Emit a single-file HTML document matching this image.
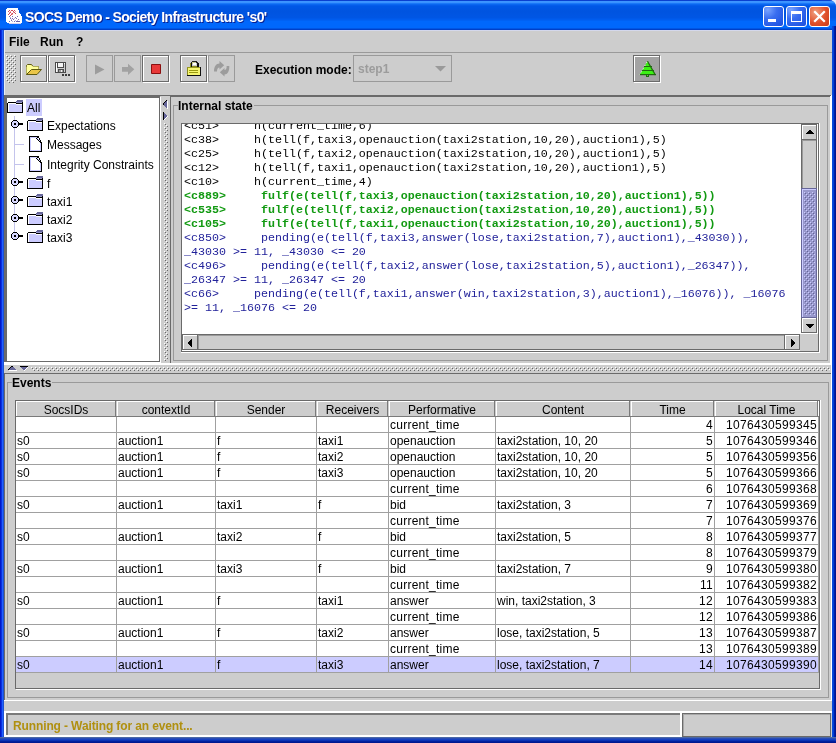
<!DOCTYPE html>
<html><head><meta charset="utf-8"><style>
*{margin:0;padding:0;box-sizing:border-box}
html,body{width:836px;height:743px;overflow:hidden;background:#E4ECFA}
body{position:relative;font-family:"Liberation Sans",sans-serif;font-size:12px;color:#000}
.a{position:absolute}
.t{white-space:pre;line-height:14px;will-change:transform}
.b{font-weight:bold}
.m{font-family:"Liberation Mono",monospace;font-size:11.67px;line-height:14px;white-space:pre;will-change:transform}
svg{position:absolute;overflow:visible}
</style></head><body>
<div class="a" style="left:0px;top:0px;width:836px;height:743px;background:#0A46D8;border-radius:0 7px 0 0"></div>
<div class="a" style="left:0px;top:0px;width:836px;height:30px;border-radius:0 7px 0 0;background:linear-gradient(to bottom,#0A40D0 0px,#0A40D0 1px,#3D95FF 1px,#3D95FF 2px,#3A92FF 2px,#3A92FF 3px,#1A78F8 3px,#1A78F8 4px,#0A66F0 4px,#0A66F0 5px,#045CEA 5px,#045CEA 6px,#0057E6 6px,#0057E6 7px,#0054E0 11px,#0054E0 12px,#0056E4 17px,#0056E4 18px,#005CEE 19px,#005CEE 20px,#0062F4 20px,#0062F4 21px,#0068FC 21px,#0068FC 22px,#0068FC 27px,#0068FC 28px,#0056E4 28px,#0056E4 29px,#0040C8 29px,#0040C8 30px)"></div>
<div class="a" style="left:0px;top:30px;width:4px;height:713px;background:linear-gradient(to right,#0018C8 0px,#0018C8 1px,#0A30E0 1px,#0A30E0 2px,#2060FF 2px,#2060FF 3px,#1E50D0 3px,#1E50D0 4px)"></div>
<div class="a" style="left:832px;top:26px;width:4px;height:717px;background:linear-gradient(to right,#0A48D8 0px,#0A48D8 1px,#0040D8 1px,#0040D8 2px,#0020A8 2px,#0020A8 3px,#001490 3px,#001490 4px)"></div>
<div class="a" style="left:0px;top:737px;width:836px;height:6px;background:linear-gradient(to bottom,#4A68A8 0px,#4A68A8 1px,#2A4CB4 1px,#2A4CB4 2px,#1640C0 2px,#1640C0 3px,#0A32B4 3px,#0A32B4 4px,#02209C 4px,#02209C 5px,#001890 5px,#001890 6px)"></div>
<div class="a" style="left:4px;top:30px;width:828px;height:707px;background:#CDCDCD"></div>
<div class="a" style="left:4px;top:30px;width:828px;height:1px;background:#D4D8EC"></div>
<svg style="left:6px;top:8px" width="16" height="16" shape-rendering="crispEdges"><rect x="1" y="0" width="11" height="1" fill="#FFFFFF"/><rect x="0" y="1" width="12" height="1" fill="#FFFFFF"/><rect x="0" y="2" width="13" height="1" fill="#FFFFFF"/><rect x="0" y="3" width="13" height="1" fill="#FFFFFF"/><rect x="0" y="4" width="13" height="1" fill="#FFFFFF"/><rect x="0" y="5" width="14" height="1" fill="#FFFFFF"/><rect x="0" y="6" width="15" height="1" fill="#FFFFFF"/><rect x="0" y="7" width="15" height="1" fill="#FFFFFF"/><rect x="0" y="8" width="16" height="1" fill="#FFFFFF"/><rect x="0" y="9" width="16" height="1" fill="#FFFFFF"/><rect x="0" y="10" width="16" height="1" fill="#FFFFFF"/><rect x="0" y="11" width="16" height="1" fill="#FFFFFF"/><rect x="0" y="12" width="16" height="1" fill="#FFFFFF"/><rect x="0" y="13" width="16" height="1" fill="#FFFFFF"/><rect x="1" y="14" width="15" height="1" fill="#FFFFFF"/><rect x="3" y="15" width="12" height="1" fill="#D8D0F0"/><rect x="3" y="2" width="1" height="1" fill="#D04858"/><rect x="5" y="2" width="1" height="1" fill="#D04858"/><rect x="2" y="3" width="1" height="1" fill="#D04858"/><rect x="4" y="4" width="1" height="1" fill="#D04858"/><rect x="7" y="3" width="1" height="1" fill="#D04858"/><rect x="8" y="4" width="1" height="1" fill="#D04858"/><rect x="3" y="5" width="1" height="1" fill="#D04858"/><rect x="6" y="5" width="1" height="1" fill="#D04858"/><rect x="5" y="6" width="1" height="1" fill="#D04858"/><rect x="9" y="5" width="1" height="1" fill="#D04858"/><rect x="2" y="6" width="1" height="1" fill="#D04858"/><rect x="6" y="2" width="1" height="1" fill="#D04858"/><rect x="8" y="2" width="1" height="1" fill="#D04858"/><rect x="4" y="7" width="1" height="1" fill="#D04858"/><rect x="4" y="3" width="1" height="1" fill="#F0A0A8"/><rect x="7" y="4" width="1" height="1" fill="#F0A0A8"/><rect x="5" y="5" width="1" height="1" fill="#F0A0A8"/><rect x="9" y="3" width="1" height="1" fill="#F0A0A8"/><rect x="6" y="6" width="1" height="1" fill="#F0A0A8"/><rect x="3" y="4" width="1" height="1" fill="#F0A0A8"/><rect x="3" y="8" width="1" height="1" fill="#7868B0"/><rect x="6" y="8" width="1" height="1" fill="#7868B0"/><rect x="9" y="9" width="1" height="1" fill="#7868B0"/><rect x="4" y="10" width="1" height="1" fill="#7868B0"/><rect x="7" y="11" width="1" height="1" fill="#7868B0"/><rect x="10" y="10" width="1" height="1" fill="#7868B0"/><rect x="5" y="12" width="1" height="1" fill="#7868B0"/><rect x="8" y="13" width="1" height="1" fill="#7868B0"/><rect x="12" y="11" width="1" height="1" fill="#7868B0"/><rect x="3" y="13" width="1" height="1" fill="#7868B0"/><rect x="11" y="8" width="1" height="1" fill="#7868B0"/><rect x="6" y="10" width="1" height="1" fill="#7868B0"/><rect x="4" y="9" width="1" height="1" fill="#B8B0E0"/><rect x="8" y="10" width="1" height="1" fill="#B8B0E0"/><rect x="5" y="11" width="1" height="1" fill="#B8B0E0"/><rect x="9" y="12" width="1" height="1" fill="#B8B0E0"/><rect x="6" y="13" width="1" height="1" fill="#B8B0E0"/><rect x="11" y="12" width="1" height="1" fill="#B8B0E0"/><rect x="10" y="13" width="4" height="1" fill="#6A60A8"/></svg>
<div class="a t b" style="left:25px;top:9px;color:#fff;font-size:14px;letter-spacing:-0.62px;line-height:16px;text-shadow:1px 1px 0 #0A2090">SOCS Demo - Society Infrastructure 's0'</div>
<div class="a" style="left:763px;top:6px;width:21px;height:21px;border:1px solid #fff;border-radius:3px;background:radial-gradient(circle at 20% 15%,#7AA4FF,#3A6EF0 40%,#2458E4 80%,#1E50DC)"></div>
<div class="a" style="left:786px;top:6px;width:21px;height:21px;border:1px solid #fff;border-radius:3px;background:radial-gradient(circle at 20% 15%,#7AA4FF,#3A6EF0 40%,#2458E4 80%,#1E50DC)"></div>
<div class="a" style="left:809px;top:6px;width:21px;height:21px;border:1px solid #fff;border-radius:3px;background:radial-gradient(circle at 30% 30%,#F0A080,#E0502A 55%,#C83A18)"></div>
<div class="a" style="left:768px;top:19px;width:8px;height:3px;background:#fff"></div>
<div class="a" style="left:791px;top:11px;width:11px;height:11px;border:1px solid #fff;border-top:3px solid #fff"></div>
<svg style="left:809px;top:6px" width="21" height="21" viewBox="0 0 21 21">
<path d="M6 6L15 15M15 6L6 15" stroke="#fff" stroke-width="2.2" stroke-linecap="square"/></svg>
<div class="a t b" style="left:9px;top:35px">File</div>
<div class="a t b" style="left:40px;top:35px">Run</div>
<div class="a t b" style="left:76px;top:35px">?</div>
<div class="a" style="left:4px;top:52px;width:828px;height:1px;background:#9A9A9A"></div>
<svg style="left:6px;top:55px" width="10" height="28" shape-rendering="crispEdges"><defs><pattern id="grip" width="4" height="4" patternUnits="userSpaceOnUse"><rect x="0" y="0" width="1" height="1" fill="#FFFFFF"/><rect x="1" y="1" width="1" height="1" fill="#666666"/><rect x="2" y="2" width="1" height="1" fill="#FFFFFF"/><rect x="3" y="3" width="1" height="1" fill="#666666"/></pattern></defs><rect width="10" height="28" fill="url(#grip)"/></svg>
<div class="a" style="left:4px;top:31px;width:1px;height:64px;background:#E8EEF6"></div>
<div class="a" style="left:21px;top:56px;width:27px;height:27px;border:1px solid #FFFFFF"></div>
<div class="a" style="left:20px;top:55px;width:27px;height:27px;border:1px solid #6B6B6B"></div>
<div class="a" style="left:49px;top:56px;width:27px;height:27px;border:1px solid #FFFFFF"></div>
<div class="a" style="left:48px;top:55px;width:27px;height:27px;border:1px solid #6B6B6B"></div>
<div class="a" style="left:86px;top:55px;width:27px;height:27px;border:1px solid #9A9A9A"></div>
<div class="a" style="left:114px;top:55px;width:27px;height:27px;border:1px solid #9A9A9A"></div>
<div class="a" style="left:143px;top:56px;width:27px;height:27px;border:1px solid #FFFFFF"></div>
<div class="a" style="left:142px;top:55px;width:27px;height:27px;border:1px solid #6B6B6B"></div>
<div class="a" style="left:181px;top:56px;width:27px;height:27px;border:1px solid #FFFFFF"></div>
<div class="a" style="left:180px;top:55px;width:27px;height:27px;border:1px solid #6B6B6B"></div>
<div class="a" style="left:208px;top:55px;width:27px;height:27px;border:1px solid #9A9A9A"></div>
<svg style="left:24px;top:58px" width="20" height="20" viewBox="0 0 20 20">
<path d="M2.5 16.5V7.5L3.5 6.5H7.5L9 8.5H14.5V11.5" fill="#FFFF9C" stroke="#5E5A12" stroke-width="1"/>
<path d="M2.5 16.5V8.5H14.5V11.5H6.5z" fill="#FFFF9C"/>
<path d="M7.5 11.5H17.5L13 16.5H2.5Z" fill="#EAC64A" stroke="#5E5A12" stroke-width="1" stroke-linejoin="round"/>
</svg>
<svg style="left:52px;top:58px" width="20" height="20" shape-rendering="crispEdges"><rect x="3" y="4" width="11" height="11" fill="#CDCDCD"/><rect x="3" y="4" width="11" height="1" fill="#4A4A4A"/><rect x="3" y="4" width="1" height="11" fill="#4A4A4A"/><rect x="13" y="4" width="1" height="11" fill="#4A4A4A"/><rect x="3" y="14" width="11" height="1" fill="#4A4A4A"/><rect x="4" y="5" width="1" height="9" fill="#FFFFFF"/><rect x="6" y="5" width="5" height="4" fill="#F4F4F4"/><rect x="5" y="5" width="1" height="4" fill="#4A4A4A"/><rect x="11" y="5" width="1" height="4" fill="#4A4A4A"/><rect x="5" y="9" width="7" height="1" fill="#4A4A4A"/><rect x="12" y="5" width="1" height="1" fill="#FFFFFF"/><rect x="6" y="11" width="6" height="1" fill="#4A4A4A"/><rect x="6" y="11" width="1" height="3" fill="#4A4A4A"/><rect x="11" y="11" width="1" height="3" fill="#4A4A4A"/><rect x="7" y="12" width="4" height="2" fill="#9C9C9C"/><rect x="9" y="12" width="1" height="2" fill="#F0F0F0"/><rect x="10" y="16" width="2" height="2" fill="#3A3A3A"/><rect x="13" y="16" width="2" height="2" fill="#3A3A3A"/><rect x="16" y="16" width="2" height="2" fill="#3A3A3A"/></svg>
<svg style="left:94px;top:64px" width="12" height="11" viewBox="0 0 12 11"><path d="M1 0.5L10.5 5.5L1 10.5z" fill="#9C9C9C"/></svg>
<svg style="left:121px;top:63px" width="15" height="13" viewBox="0 0 15 13"><path d="M1 4H7V0.8L13.3 6.3L7 12V8.8H1z" fill="#A2A2A2"/></svg>
<svg style="left:150px;top:63px" width="12" height="12" viewBox="0 0 12 12"><path d="M1.5 1.5h9v9h-9z" fill="#E83838" stroke="#8A1010"/></svg>
<svg style="left:184px;top:58px" width="20" height="20" shape-rendering="crispEdges"><rect x="8" y="3" width="5" height="1" fill="#222"/><rect x="7" y="4" width="1" height="1" fill="#222"/><rect x="8" y="4" width="4" height="1" fill="#C8C890"/><rect x="12" y="4" width="2" height="1" fill="#222"/><rect x="6" y="5" width="1" height="4" fill="#8A8A20"/><rect x="7" y="5" width="1" height="4" fill="#111"/><rect x="8" y="5" width="1" height="1" fill="#C8C890"/><rect x="9" y="5" width="3" height="2" fill="#FFFFFF"/><rect x="13" y="5" width="2" height="4" fill="#111"/><rect x="8" y="8" width="5" height="1" fill="#8A8A20"/><rect x="3" y="9" width="14" height="1" fill="#9A9A20"/><rect x="3" y="10" width="1" height="7" fill="#8A8A20"/><rect x="4" y="10" width="12" height="7" fill="#F6F670"/><rect x="16" y="9" width="1" height="9" fill="#111"/><rect x="5" y="12" width="9" height="1" fill="#9A9A10"/><rect x="5" y="14" width="9" height="1" fill="#9A9A10"/><rect x="3" y="17" width="14" height="1" fill="#111"/></svg>
<svg style="left:211px;top:58px" width="20" height="20" viewBox="0 0 20 20">
<path d="M8.5 3L13.2 7.3L8.5 11.5V9.5C7 9.5 6 11 6 13.5H3C3 8.5 5 5.5 8.5 5.5z" fill="#9C9C9C"/>
<path d="M13.5 18.5L8.8 14.2L13.5 10V12C15 12 15.8 10.5 15.6 8H18.3C18.5 13 16.5 16.5 13.5 16.5z" fill="#9C9C9C"/>
</svg>
<div class="a t b" style="left:255px;top:63px">Execution mode:</div>
<div class="a" style="left:353px;top:55px;width:99px;height:27px;border:1px solid #9A9A9A"></div>
<div class="a t b" style="left:358px;top:62px;color:#9C9C9C">step1</div>
<svg style="left:435px;top:66px" width="12" height="6" viewBox="0 0 12 6"><path d="M0 0h11l-5.5 5.5z" fill="#9A9A9A"/></svg>
<div class="a" style="left:634px;top:56px;width:26px;height:26px;background:#A3A3A3"></div>
<div class="a" style="left:634px;top:56px;width:27px;height:27px;border:1px solid #FFFFFF"></div>
<div class="a" style="left:633px;top:55px;width:27px;height:27px;border:1px solid #6B6B6B"></div>
<svg style="left:639px;top:61px" width="18" height="18" viewBox="0 0 18 18">
<polygon points="8.5,0.3 16.4,14 0.6,14" fill="#3CF014"/>
<path d="M8.5 0.3L16.4 14" stroke="#1F6A0E" stroke-width="1.3"/>
<path d="M8 1L0.6 14" stroke="#EFFFE0" stroke-width="0.9" stroke-dasharray="1.2 2.4"/>
<rect x="5" y="5" width="8" height="1" fill="#1F6A0E"/>
<rect x="3" y="9" width="12" height="1" fill="#1F6A0E"/>
<rect x="1" y="13" width="16" height="1.2" fill="#1F6A0E"/>
<rect x="7" y="14" width="3" height="2" fill="#1F6A0E"/>
<rect x="8" y="14" width="1" height="1" fill="#5AE030"/>
</svg>
<div class="a" style="left:4px;top:95px;width:827px;height:1px;background:#6A6A6A"></div>
<div class="a" style="left:4px;top:96px;width:156px;height:1px;background:#6A6A6A"></div>
<div class="a" style="left:170px;top:96px;width:661px;height:1px;background:#6A6A6A"></div>
<div class="a" style="left:4px;top:97px;width:156px;height:1px;background:#6A6A6A"></div>
<div class="a" style="left:4px;top:95px;width:3px;height:267px;background:#6A6A6A"></div>
<div class="a" style="left:7px;top:98px;width:152px;height:263px;background:#fff"></div>
<div class="a" style="left:159px;top:97px;width:1px;height:265px;background:#6A6A6A"></div>
<div class="a" style="left:6px;top:361px;width:154px;height:1px;background:#6A6A6A"></div>
<div class="a" style="left:160px;top:97px;width:1px;height:266px;background:#FFFFFF"></div>
<div class="a" style="left:4px;top:362px;width:157px;height:1px;background:#FFFFFF"></div>
<svg style="left:164px;top:123px" width="4" height="238" shape-rendering="crispEdges"><defs><pattern id="bv" width="4" height="4" patternUnits="userSpaceOnUse"><rect x="0" y="0" width="1" height="1" fill="#FFFFFF"/><rect x="1" y="1" width="1" height="1" fill="#666666"/><rect x="2" y="2" width="1" height="1" fill="#FFFFFF"/><rect x="3" y="3" width="1" height="1" fill="#666666"/></pattern></defs><rect width="4" height="238" fill="url(#bv)"/></svg>
<div class="a" style="left:170px;top:96px;width:1px;height:267px;background:#6A6A6A"></div>
<svg style="left:163px;top:100px" width="5" height="9" shape-rendering="crispEdges"><rect x="0" y="3" width="1" height="1" fill="#000000"/><rect x="0" y="4" width="1" height="1" fill="#000000"/><rect x="1" y="2" width="1" height="1" fill="#000000"/><rect x="1" y="3" width="1" height="1" fill="#666699"/><rect x="1" y="4" width="1" height="1" fill="#666699"/><rect x="1" y="5" width="1" height="1" fill="#666699"/><rect x="2" y="1" width="1" height="1" fill="#000000"/><rect x="2" y="2" width="1" height="1" fill="#666699"/><rect x="2" y="3" width="1" height="1" fill="#666699"/><rect x="2" y="4" width="1" height="1" fill="#666699"/><rect x="2" y="5" width="1" height="1" fill="#666699"/><rect x="2" y="6" width="1" height="1" fill="#666699"/><rect x="3" y="0" width="1" height="1" fill="#000000"/><rect x="3" y="1" width="1" height="1" fill="#666699"/><rect x="3" y="2" width="1" height="1" fill="#666699"/><rect x="3" y="3" width="1" height="1" fill="#666699"/><rect x="3" y="4" width="1" height="1" fill="#666699"/><rect x="3" y="5" width="1" height="1" fill="#666699"/><rect x="3" y="6" width="1" height="1" fill="#666699"/><rect x="3" y="7" width="1" height="1" fill="#666699"/><rect x="4" y="1" width="1" height="1" fill="#FFFFFF"/><rect x="4" y="2" width="1" height="1" fill="#FFFFFF"/><rect x="4" y="3" width="1" height="1" fill="#FFFFFF"/><rect x="4" y="4" width="1" height="1" fill="#FFFFFF"/><rect x="4" y="5" width="1" height="1" fill="#FFFFFF"/><rect x="4" y="6" width="1" height="1" fill="#FFFFFF"/><rect x="4" y="7" width="1" height="1" fill="#FFFFFF"/><rect x="4" y="8" width="1" height="1" fill="#FFFFFF"/></svg>
<svg style="left:163px;top:112px" width="5" height="8" shape-rendering="crispEdges"><rect x="0" y="0" width="1" height="1" fill="#000000"/><rect x="0" y="1" width="1" height="1" fill="#000000"/><rect x="0" y="2" width="1" height="1" fill="#000000"/><rect x="0" y="3" width="1" height="1" fill="#000000"/><rect x="0" y="4" width="1" height="1" fill="#000000"/><rect x="0" y="5" width="1" height="1" fill="#000000"/><rect x="0" y="6" width="1" height="1" fill="#000000"/><rect x="0" y="7" width="1" height="1" fill="#000000"/><rect x="1" y="1" width="1" height="1" fill="#666699"/><rect x="1" y="2" width="1" height="1" fill="#666699"/><rect x="1" y="3" width="1" height="1" fill="#666699"/><rect x="1" y="4" width="1" height="1" fill="#666699"/><rect x="1" y="5" width="1" height="1" fill="#666699"/><rect x="1" y="6" width="1" height="1" fill="#666699"/><rect x="1" y="7" width="1" height="1" fill="#FFFFFF"/><rect x="2" y="2" width="1" height="1" fill="#666699"/><rect x="2" y="3" width="1" height="1" fill="#666699"/><rect x="2" y="4" width="1" height="1" fill="#666699"/><rect x="2" y="5" width="1" height="1" fill="#666699"/><rect x="2" y="6" width="1" height="1" fill="#FFFFFF"/><rect x="3" y="3" width="1" height="1" fill="#666699"/><rect x="3" y="4" width="1" height="1" fill="#666699"/><rect x="3" y="5" width="1" height="1" fill="#FFFFFF"/><rect x="4" y="4" width="1" height="1" fill="#FFFFFF"/></svg>
<div class="a" style="left:830px;top:96px;width:1px;height:268px;background:#FFFFFF"></div>
<div class="a" style="left:831px;top:95px;width:1px;height:606px;background:#FFFFFF"></div>
<div class="a" style="left:4px;top:363px;width:828px;height:1px;background:#FFFFFF"></div>
<div class="a" style="left:4px;top:364px;width:827px;height:1px;background:#FFFFFF"></div>
<div class="a" style="left:26px;top:99px;width:16px;height:17px;background:#CCCCFF"></div>
<svg style="left:7px;top:97px" width="16" height="16" shape-rendering="crispEdges"><rect x="10" y="3" width="6" height="1" fill="#666699"/><rect x="9" y="4" width="7" height="1" fill="#666699"/><rect x="2" y="7" width="13" height="1" fill="#CCCCFF"/><rect x="9" y="5" width="6" height="1" fill="#9999CC"/><rect x="0" y="6" width="1" height="10" fill="#000"/><rect x="1" y="5" width="8" height="1" fill="#000"/><rect x="9" y="6" width="6" height="1" fill="#000"/><rect x="15" y="5" width="1" height="11" fill="#000"/><rect x="0" y="15" width="16" height="1" fill="#000"/><rect x="1" y="6" width="1" height="9" fill="#fff"/><rect x="1" y="6" width="8" height="1" fill="#fff"/><rect x="9" y="7" width="6" height="1" fill="#fff"/></svg>
<div class="a" style="left:9px;top:105px;width:13px;height:7px;background:#CCCCFF"></div>
<div class="a t" style="left:27px;top:101px">All</div>
<div class="a" style="left:14px;top:116px;width:1px;height:121px;background:#C4C4EC"></div>
<svg style="left:7px;top:116px" width="16" height="16" shape-rendering="crispEdges"><rect x="5" y="6" width="6" height="4" fill="#D8D8FF"/><rect x="6" y="5" width="4" height="6" fill="#D8D8FF"/><rect x="4" y="6" width="1" height="4" fill="#000"/><rect x="5" y="5" width="1" height="1" fill="#000"/><rect x="6" y="4" width="4" height="1" fill="#000"/><rect x="10" y="5" width="1" height="1" fill="#000"/><rect x="11" y="6" width="1" height="4" fill="#000"/><rect x="10" y="10" width="1" height="1" fill="#000"/><rect x="6" y="11" width="4" height="1" fill="#000"/><rect x="5" y="10" width="1" height="1" fill="#000"/><rect x="7" y="7" width="2" height="2" fill="#000"/><rect x="12" y="7" width="4" height="2" fill="#000"/></svg>
<svg style="left:27px;top:115px" width="16" height="16" shape-rendering="crispEdges"><rect x="10" y="3" width="6" height="1" fill="#666699"/><rect x="9" y="4" width="7" height="1" fill="#666699"/><rect x="2" y="7" width="13" height="1" fill="#CCCCFF"/><rect x="9" y="5" width="6" height="1" fill="#9999CC"/><rect x="0" y="6" width="1" height="10" fill="#000"/><rect x="1" y="5" width="8" height="1" fill="#000"/><rect x="9" y="6" width="6" height="1" fill="#000"/><rect x="15" y="5" width="1" height="11" fill="#000"/><rect x="0" y="15" width="16" height="1" fill="#000"/><rect x="1" y="6" width="1" height="9" fill="#fff"/><rect x="1" y="6" width="8" height="1" fill="#fff"/><rect x="9" y="7" width="6" height="1" fill="#fff"/></svg>
<div class="a" style="left:29px;top:123px;width:13px;height:7px;background:#CCCCFF"></div>
<div class="a t" style="left:47px;top:119px">Expectations</div>
<div class="a" style="left:15px;top:144px;width:9px;height:1px;background:#C4C4EC"></div>
<svg style="left:27px;top:136px" width="16" height="16" shape-rendering="crispEdges"><rect x="4" y="2" width="9" height="12" fill="#fff"/><rect x="2" y="0" width="1" height="16" fill="#000"/><rect x="2" y="0" width="10" height="1" fill="#000"/><rect x="2" y="15" width="13" height="1" fill="#000"/><rect x="14" y="6" width="1" height="10" fill="#000"/><rect x="9" y="2" width="1" height="1" fill="#000"/><rect x="10" y="3" width="1" height="1" fill="#000"/><rect x="11" y="4" width="1" height="1" fill="#000"/><rect x="12" y="5" width="1" height="1" fill="#000"/><rect x="13" y="6" width="1" height="1" fill="#000"/><rect x="10" y="1" width="2" height="1" fill="#000"/><rect x="12" y="2" width="1" height="2" fill="#000"/><rect x="13" y="4" width="1" height="2" fill="#000"/><rect x="3" y="1" width="1" height="14" fill="#CCCCFF"/><rect x="3" y="1" width="7" height="1" fill="#CCCCFF"/><rect x="13" y="7" width="1" height="8" fill="#CCCCFF"/><rect x="10" y="2" width="1" height="1" fill="#CCCCFF"/><rect x="11" y="3" width="1" height="1" fill="#CCCCFF"/><rect x="12" y="4" width="1" height="1" fill="#CCCCFF"/><rect x="3" y="14" width="11" height="1" fill="#CCCCFF"/></svg>
<div class="a t" style="left:47px;top:138px">Messages</div>
<div class="a" style="left:15px;top:164px;width:9px;height:1px;background:#C4C4EC"></div>
<svg style="left:27px;top:156px" width="16" height="16" shape-rendering="crispEdges"><rect x="4" y="2" width="9" height="12" fill="#fff"/><rect x="2" y="0" width="1" height="16" fill="#000"/><rect x="2" y="0" width="10" height="1" fill="#000"/><rect x="2" y="15" width="13" height="1" fill="#000"/><rect x="14" y="6" width="1" height="10" fill="#000"/><rect x="9" y="2" width="1" height="1" fill="#000"/><rect x="10" y="3" width="1" height="1" fill="#000"/><rect x="11" y="4" width="1" height="1" fill="#000"/><rect x="12" y="5" width="1" height="1" fill="#000"/><rect x="13" y="6" width="1" height="1" fill="#000"/><rect x="10" y="1" width="2" height="1" fill="#000"/><rect x="12" y="2" width="1" height="2" fill="#000"/><rect x="13" y="4" width="1" height="2" fill="#000"/><rect x="3" y="1" width="1" height="14" fill="#CCCCFF"/><rect x="3" y="1" width="7" height="1" fill="#CCCCFF"/><rect x="13" y="7" width="1" height="8" fill="#CCCCFF"/><rect x="10" y="2" width="1" height="1" fill="#CCCCFF"/><rect x="11" y="3" width="1" height="1" fill="#CCCCFF"/><rect x="12" y="4" width="1" height="1" fill="#CCCCFF"/><rect x="3" y="14" width="11" height="1" fill="#CCCCFF"/></svg>
<div class="a t" style="left:47px;top:158px">Integrity Constraints</div>
<svg style="left:7px;top:174px" width="16" height="16" shape-rendering="crispEdges"><rect x="5" y="6" width="6" height="4" fill="#D8D8FF"/><rect x="6" y="5" width="4" height="6" fill="#D8D8FF"/><rect x="4" y="6" width="1" height="4" fill="#000"/><rect x="5" y="5" width="1" height="1" fill="#000"/><rect x="6" y="4" width="4" height="1" fill="#000"/><rect x="10" y="5" width="1" height="1" fill="#000"/><rect x="11" y="6" width="1" height="4" fill="#000"/><rect x="10" y="10" width="1" height="1" fill="#000"/><rect x="6" y="11" width="4" height="1" fill="#000"/><rect x="5" y="10" width="1" height="1" fill="#000"/><rect x="7" y="7" width="2" height="2" fill="#000"/><rect x="12" y="7" width="4" height="2" fill="#000"/></svg>
<svg style="left:27px;top:173px" width="16" height="16" shape-rendering="crispEdges"><rect x="10" y="3" width="6" height="1" fill="#666699"/><rect x="9" y="4" width="7" height="1" fill="#666699"/><rect x="2" y="7" width="13" height="1" fill="#CCCCFF"/><rect x="9" y="5" width="6" height="1" fill="#9999CC"/><rect x="0" y="6" width="1" height="10" fill="#000"/><rect x="1" y="5" width="8" height="1" fill="#000"/><rect x="9" y="6" width="6" height="1" fill="#000"/><rect x="15" y="5" width="1" height="11" fill="#000"/><rect x="0" y="15" width="16" height="1" fill="#000"/><rect x="1" y="6" width="1" height="9" fill="#fff"/><rect x="1" y="6" width="8" height="1" fill="#fff"/><rect x="9" y="7" width="6" height="1" fill="#fff"/></svg>
<div class="a" style="left:29px;top:181px;width:13px;height:7px;background:#CCCCFF"></div>
<div class="a t" style="left:47px;top:177px">f</div>
<svg style="left:7px;top:192px" width="16" height="16" shape-rendering="crispEdges"><rect x="5" y="6" width="6" height="4" fill="#D8D8FF"/><rect x="6" y="5" width="4" height="6" fill="#D8D8FF"/><rect x="4" y="6" width="1" height="4" fill="#000"/><rect x="5" y="5" width="1" height="1" fill="#000"/><rect x="6" y="4" width="4" height="1" fill="#000"/><rect x="10" y="5" width="1" height="1" fill="#000"/><rect x="11" y="6" width="1" height="4" fill="#000"/><rect x="10" y="10" width="1" height="1" fill="#000"/><rect x="6" y="11" width="4" height="1" fill="#000"/><rect x="5" y="10" width="1" height="1" fill="#000"/><rect x="7" y="7" width="2" height="2" fill="#000"/><rect x="12" y="7" width="4" height="2" fill="#000"/></svg>
<svg style="left:27px;top:191px" width="16" height="16" shape-rendering="crispEdges"><rect x="10" y="3" width="6" height="1" fill="#666699"/><rect x="9" y="4" width="7" height="1" fill="#666699"/><rect x="2" y="7" width="13" height="1" fill="#CCCCFF"/><rect x="9" y="5" width="6" height="1" fill="#9999CC"/><rect x="0" y="6" width="1" height="10" fill="#000"/><rect x="1" y="5" width="8" height="1" fill="#000"/><rect x="9" y="6" width="6" height="1" fill="#000"/><rect x="15" y="5" width="1" height="11" fill="#000"/><rect x="0" y="15" width="16" height="1" fill="#000"/><rect x="1" y="6" width="1" height="9" fill="#fff"/><rect x="1" y="6" width="8" height="1" fill="#fff"/><rect x="9" y="7" width="6" height="1" fill="#fff"/></svg>
<div class="a" style="left:29px;top:199px;width:13px;height:7px;background:#CCCCFF"></div>
<div class="a t" style="left:47px;top:195px">taxi1</div>
<svg style="left:7px;top:210px" width="16" height="16" shape-rendering="crispEdges"><rect x="5" y="6" width="6" height="4" fill="#D8D8FF"/><rect x="6" y="5" width="4" height="6" fill="#D8D8FF"/><rect x="4" y="6" width="1" height="4" fill="#000"/><rect x="5" y="5" width="1" height="1" fill="#000"/><rect x="6" y="4" width="4" height="1" fill="#000"/><rect x="10" y="5" width="1" height="1" fill="#000"/><rect x="11" y="6" width="1" height="4" fill="#000"/><rect x="10" y="10" width="1" height="1" fill="#000"/><rect x="6" y="11" width="4" height="1" fill="#000"/><rect x="5" y="10" width="1" height="1" fill="#000"/><rect x="7" y="7" width="2" height="2" fill="#000"/><rect x="12" y="7" width="4" height="2" fill="#000"/></svg>
<svg style="left:27px;top:209px" width="16" height="16" shape-rendering="crispEdges"><rect x="10" y="3" width="6" height="1" fill="#666699"/><rect x="9" y="4" width="7" height="1" fill="#666699"/><rect x="2" y="7" width="13" height="1" fill="#CCCCFF"/><rect x="9" y="5" width="6" height="1" fill="#9999CC"/><rect x="0" y="6" width="1" height="10" fill="#000"/><rect x="1" y="5" width="8" height="1" fill="#000"/><rect x="9" y="6" width="6" height="1" fill="#000"/><rect x="15" y="5" width="1" height="11" fill="#000"/><rect x="0" y="15" width="16" height="1" fill="#000"/><rect x="1" y="6" width="1" height="9" fill="#fff"/><rect x="1" y="6" width="8" height="1" fill="#fff"/><rect x="9" y="7" width="6" height="1" fill="#fff"/></svg>
<div class="a" style="left:29px;top:217px;width:13px;height:7px;background:#CCCCFF"></div>
<div class="a t" style="left:47px;top:213px">taxi2</div>
<svg style="left:7px;top:228px" width="16" height="16" shape-rendering="crispEdges"><rect x="5" y="6" width="6" height="4" fill="#D8D8FF"/><rect x="6" y="5" width="4" height="6" fill="#D8D8FF"/><rect x="4" y="6" width="1" height="4" fill="#000"/><rect x="5" y="5" width="1" height="1" fill="#000"/><rect x="6" y="4" width="4" height="1" fill="#000"/><rect x="10" y="5" width="1" height="1" fill="#000"/><rect x="11" y="6" width="1" height="4" fill="#000"/><rect x="10" y="10" width="1" height="1" fill="#000"/><rect x="6" y="11" width="4" height="1" fill="#000"/><rect x="5" y="10" width="1" height="1" fill="#000"/><rect x="7" y="7" width="2" height="2" fill="#000"/><rect x="12" y="7" width="4" height="2" fill="#000"/></svg>
<svg style="left:27px;top:227px" width="16" height="16" shape-rendering="crispEdges"><rect x="10" y="3" width="6" height="1" fill="#666699"/><rect x="9" y="4" width="7" height="1" fill="#666699"/><rect x="2" y="7" width="13" height="1" fill="#CCCCFF"/><rect x="9" y="5" width="6" height="1" fill="#9999CC"/><rect x="0" y="6" width="1" height="10" fill="#000"/><rect x="1" y="5" width="8" height="1" fill="#000"/><rect x="9" y="6" width="6" height="1" fill="#000"/><rect x="15" y="5" width="1" height="11" fill="#000"/><rect x="0" y="15" width="16" height="1" fill="#000"/><rect x="1" y="6" width="1" height="9" fill="#fff"/><rect x="1" y="6" width="8" height="1" fill="#fff"/><rect x="9" y="7" width="6" height="1" fill="#fff"/></svg>
<div class="a" style="left:29px;top:235px;width:13px;height:7px;background:#CCCCFF"></div>
<div class="a t" style="left:47px;top:231px">taxi3</div>
<div class="a" style="left:173px;top:105px;width:655px;height:256px;border:1px solid #9A9A9A"></div>
<div class="a" style="left:178px;top:98px;width:76px;height:14px;background:#CDCDCD"></div>
<div class="a t b" style="left:178px;top:99px">Internal state</div>
<div class="a" style="left:181px;top:123px;width:638px;height:229px;border:1px solid #6A6A6A"></div>
<div class="a" style="left:819px;top:123px;width:1px;height:230px;background:#FFFFFF"></div>
<div class="a" style="left:181px;top:352px;width:639px;height:1px;background:#FFFFFF"></div>
<div class="a" style="left:182px;top:124px;width:619px;height:210px;overflow:hidden;background:#fff">
<div class="a m" style="left:2px;top:-5px;color:#000">&lt;c51&gt;     h(current_time,6)</div>
<div class="a m" style="left:2px;top:9px;color:#000">&lt;c38&gt;     h(tell(f,taxi3,openauction(taxi2station,10,20),auction1),5)</div>
<div class="a m" style="left:2px;top:23px;color:#000">&lt;c25&gt;     h(tell(f,taxi2,openauction(taxi2station,10,20),auction1),5)</div>
<div class="a m" style="left:2px;top:37px;color:#000">&lt;c12&gt;     h(tell(f,taxi1,openauction(taxi2station,10,20),auction1),5)</div>
<div class="a m" style="left:2px;top:51px;color:#000">&lt;c10&gt;     h(current_time,4)</div>
<div class="a m" style="left:2px;top:65px;color:#129A12;font-weight:bold">&lt;c889&gt;     fulf(e(tell(f,taxi3,openauction(taxi2station,10,20),auction1),5))</div>
<div class="a m" style="left:2px;top:79px;color:#129A12;font-weight:bold">&lt;c535&gt;     fulf(e(tell(f,taxi2,openauction(taxi2station,10,20),auction1),5))</div>
<div class="a m" style="left:2px;top:93px;color:#129A12;font-weight:bold">&lt;c105&gt;     fulf(e(tell(f,taxi1,openauction(taxi2station,10,20),auction1),5))</div>
<div class="a m" style="left:2px;top:107px;color:#22229A">&lt;c850&gt;     pending(e(tell(f,taxi3,answer(lose,taxi2station,7),auction1),_43030)),</div>
<div class="a m" style="left:2px;top:121px;color:#22229A">_43030 &gt;= 11, _43030 &lt;= 20</div>
<div class="a m" style="left:2px;top:135px;color:#22229A">&lt;c496&gt;     pending(e(tell(f,taxi2,answer(lose,taxi2station,5),auction1),_26347)),</div>
<div class="a m" style="left:2px;top:149px;color:#22229A">_26347 &gt;= 11, _26347 &lt;= 20</div>
<div class="a m" style="left:2px;top:163px;color:#22229A">&lt;c66&gt;     pending(e(tell(f,taxi1,answer(win,taxi2station,3),auction1),_16076)), _16076</div>
<div class="a m" style="left:2px;top:177px;color:#22229A">&gt;= 11, _16076 &lt;= 20</div>
</div>
<div class="a" style="left:801px;top:124px;width:17px;height:210px;background:#CDCDCD"></div>
<div class="a" style="left:801px;top:124px;width:1px;height:210px;background:#6A6A6A"></div>
<div class="a" style="left:816px;top:124px;width:1px;height:210px;background:#6A6A6A"></div>
<div class="a" style="left:817px;top:124px;width:1px;height:210px;background:#FFFFFF"></div>
<div class="a" style="left:802px;top:140px;width:1px;height:48px;background:#9A9A9A"></div>
<div class="a" style="left:802px;top:140px;width:14px;height:1px;background:#9A9A9A"></div>
<div class="a" style="left:801px;top:124px;width:16px;height:1px;background:#6A6A6A"></div>
<div class="a" style="left:802px;top:125px;width:14px;height:1px;background:#FFFFFF"></div>
<div class="a" style="left:802px;top:125px;width:1px;height:14px;background:#FFFFFF"></div>
<div class="a" style="left:801px;top:139px;width:16px;height:1px;background:#6A6A6A"></div>
<svg style="left:806px;top:130px" width="8" height="4" shape-rendering="crispEdges"><rect x="3" y="0" width="2" height="1" fill="#000"/><rect x="2" y="1" width="4" height="1" fill="#000"/><rect x="1" y="2" width="6" height="1" fill="#000"/><rect x="0" y="3" width="8" height="1" fill="#000"/></svg>
<div class="a" style="left:801px;top:188px;width:16px;height:130px;background:#9999CC"></div>
<div class="a" style="left:801px;top:188px;width:16px;height:130px;border:1px solid #666699"></div>
<div class="a" style="left:802px;top:189px;width:14px;height:1px;background:#CCCCFF"></div>
<div class="a" style="left:802px;top:189px;width:1px;height:128px;background:#CCCCFF"></div>
<svg style="left:804px;top:192px" width="11" height="123" shape-rendering="crispEdges"><defs><pattern id="thumb" width="4" height="4" patternUnits="userSpaceOnUse"><rect x="0" y="0" width="1" height="1" fill="#CCCCFF"/><rect x="1" y="1" width="1" height="1" fill="#666699"/><rect x="2" y="2" width="1" height="1" fill="#CCCCFF"/><rect x="3" y="3" width="1" height="1" fill="#666699"/></pattern></defs><rect width="11" height="123" fill="url(#thumb)"/></svg>
<div class="a" style="left:802px;top:318px;width:14px;height:1px;background:#FFFFFF"></div>
<div class="a" style="left:802px;top:318px;width:1px;height:15px;background:#FFFFFF"></div>
<div class="a" style="left:801px;top:332px;width:16px;height:1px;background:#6A6A6A"></div>
<div class="a" style="left:801px;top:333px;width:17px;height:1px;background:#FFFFFF"></div>
<svg style="left:806px;top:324px" width="8" height="4" shape-rendering="crispEdges"><rect x="0" y="0" width="8" height="1" fill="#000"/><rect x="1" y="1" width="6" height="1" fill="#000"/><rect x="2" y="2" width="4" height="1" fill="#000"/><rect x="3" y="3" width="2" height="1" fill="#000"/></svg>
<div class="a" style="left:182px;top:334px;width:619px;height:17px;background:#CDCDCD"></div>
<div class="a" style="left:182px;top:334px;width:619px;height:1px;background:#6A6A6A"></div>
<div class="a" style="left:182px;top:349px;width:619px;height:1px;background:#6A6A6A"></div>
<div class="a" style="left:182px;top:350px;width:619px;height:1px;background:#FFFFFF"></div>
<div class="a" style="left:198px;top:335px;width:587px;height:1px;background:#9A9A9A"></div>
<div class="a" style="left:198px;top:335px;width:1px;height:14px;background:#9A9A9A"></div>
<div class="a" style="left:182px;top:334px;width:1px;height:16px;background:#6A6A6A"></div>
<div class="a" style="left:183px;top:335px;width:1px;height:14px;background:#FFFFFF"></div>
<div class="a" style="left:183px;top:335px;width:14px;height:1px;background:#FFFFFF"></div>
<div class="a" style="left:197px;top:334px;width:1px;height:16px;background:#6A6A6A"></div>
<svg style="left:188px;top:339px" width="4" height="8" shape-rendering="crispEdges"><rect x="3" y="0" width="1" height="8" fill="#000"/><rect x="2" y="1" width="1" height="6" fill="#000"/><rect x="1" y="2" width="1" height="4" fill="#000"/><rect x="0" y="3" width="1" height="2" fill="#000"/></svg>
<div class="a" style="left:784px;top:334px;width:1px;height:16px;background:#6A6A6A"></div>
<div class="a" style="left:785px;top:335px;width:1px;height:14px;background:#FFFFFF"></div>
<div class="a" style="left:785px;top:335px;width:14px;height:1px;background:#FFFFFF"></div>
<div class="a" style="left:799px;top:334px;width:1px;height:16px;background:#6A6A6A"></div>
<svg style="left:791px;top:339px" width="4" height="8" shape-rendering="crispEdges"><rect x="0" y="0" width="1" height="8" fill="#000"/><rect x="1" y="1" width="1" height="6" fill="#000"/><rect x="2" y="2" width="1" height="4" fill="#000"/><rect x="3" y="3" width="1" height="2" fill="#000"/></svg>
<div class="a" style="left:800px;top:334px;width:18px;height:17px;background:#CDCDCD"></div>
<svg style="left:31px;top:367px" width="799" height="4" shape-rendering="crispEdges"><defs><pattern id="bh" width="4" height="4" patternUnits="userSpaceOnUse"><rect x="0" y="0" width="1" height="1" fill="#FFFFFF"/><rect x="1" y="1" width="1" height="1" fill="#666666"/><rect x="2" y="2" width="1" height="1" fill="#FFFFFF"/><rect x="3" y="3" width="1" height="1" fill="#666666"/></pattern></defs><rect width="799" height="4" fill="url(#bh)"/></svg>
<div class="a" style="left:4px;top:373px;width:827px;height:1px;background:#6A6A6A"></div>
<svg style="left:8px;top:366px" width="9" height="5" shape-rendering="crispEdges"><rect x="3" y="0" width="1" height="1" fill="#000000"/><rect x="4" y="0" width="1" height="1" fill="#000000"/><rect x="2" y="1" width="1" height="1" fill="#000000"/><rect x="3" y="1" width="1" height="1" fill="#666699"/><rect x="4" y="1" width="1" height="1" fill="#666699"/><rect x="5" y="1" width="1" height="1" fill="#666699"/><rect x="1" y="2" width="1" height="1" fill="#000000"/><rect x="2" y="2" width="1" height="1" fill="#666699"/><rect x="3" y="2" width="1" height="1" fill="#666699"/><rect x="4" y="2" width="1" height="1" fill="#666699"/><rect x="5" y="2" width="1" height="1" fill="#666699"/><rect x="6" y="2" width="1" height="1" fill="#666699"/><rect x="0" y="3" width="1" height="1" fill="#000000"/><rect x="1" y="3" width="1" height="1" fill="#666699"/><rect x="2" y="3" width="1" height="1" fill="#666699"/><rect x="3" y="3" width="1" height="1" fill="#666699"/><rect x="4" y="3" width="1" height="1" fill="#666699"/><rect x="5" y="3" width="1" height="1" fill="#666699"/><rect x="6" y="3" width="1" height="1" fill="#666699"/><rect x="7" y="3" width="1" height="1" fill="#666699"/><rect x="1" y="4" width="1" height="1" fill="#FFFFFF"/><rect x="2" y="4" width="1" height="1" fill="#FFFFFF"/><rect x="3" y="4" width="1" height="1" fill="#FFFFFF"/><rect x="4" y="4" width="1" height="1" fill="#FFFFFF"/><rect x="5" y="4" width="1" height="1" fill="#FFFFFF"/><rect x="6" y="4" width="1" height="1" fill="#FFFFFF"/><rect x="7" y="4" width="1" height="1" fill="#FFFFFF"/><rect x="8" y="4" width="1" height="1" fill="#FFFFFF"/></svg>
<svg style="left:20px;top:366px" width="8" height="5" shape-rendering="crispEdges"><rect x="0" y="0" width="1" height="1" fill="#000000"/><rect x="1" y="0" width="1" height="1" fill="#000000"/><rect x="2" y="0" width="1" height="1" fill="#000000"/><rect x="3" y="0" width="1" height="1" fill="#000000"/><rect x="4" y="0" width="1" height="1" fill="#000000"/><rect x="5" y="0" width="1" height="1" fill="#000000"/><rect x="6" y="0" width="1" height="1" fill="#000000"/><rect x="7" y="0" width="1" height="1" fill="#000000"/><rect x="1" y="1" width="1" height="1" fill="#666699"/><rect x="2" y="1" width="1" height="1" fill="#666699"/><rect x="3" y="1" width="1" height="1" fill="#666699"/><rect x="4" y="1" width="1" height="1" fill="#666699"/><rect x="5" y="1" width="1" height="1" fill="#666699"/><rect x="6" y="1" width="1" height="1" fill="#666699"/><rect x="7" y="1" width="1" height="1" fill="#FFFFFF"/><rect x="2" y="2" width="1" height="1" fill="#666699"/><rect x="3" y="2" width="1" height="1" fill="#666699"/><rect x="4" y="2" width="1" height="1" fill="#666699"/><rect x="5" y="2" width="1" height="1" fill="#666699"/><rect x="6" y="2" width="1" height="1" fill="#FFFFFF"/><rect x="3" y="3" width="1" height="1" fill="#666699"/><rect x="4" y="3" width="1" height="1" fill="#666699"/><rect x="5" y="3" width="1" height="1" fill="#FFFFFF"/><rect x="4" y="4" width="1" height="1" fill="#FFFFFF"/></svg>
<div class="a" style="left:4px;top:373px;width:1px;height:327px;background:#6A6A6A"></div>
<div class="a" style="left:4px;top:700px;width:828px;height:1px;background:#FFFFFF"></div>
<div class="a" style="left:7px;top:382px;width:822px;height:316px;border:1px solid #9A9A9A"></div>
<div class="a" style="left:12px;top:375px;width:40px;height:14px;background:#CDCDCD"></div>
<div class="a t b" style="left:12px;top:376px">Events</div>
<div class="a" style="left:15px;top:400px;width:805px;height:289px;border:1px solid #6A6A6A"></div>
<div class="a" style="left:820px;top:400px;width:1px;height:290px;background:#FFFFFF"></div>
<div class="a" style="left:16px;top:689px;width:805px;height:1px;background:#FFFFFF"></div>
<div class="a" style="left:16px;top:401px;width:803px;height:16px;background:#CDCDCD"></div>
<div class="a" style="left:16px;top:401px;width:100px;height:1px;background:#FFFFFF"></div>
<div class="a" style="left:16px;top:401px;width:1px;height:15px;background:#FFFFFF"></div>
<div class="a" style="left:115px;top:401px;width:1px;height:16px;background:#7A7A7A"></div>
<div class="a t" style="left:16px;top:403px;width:100px;text-align:center">SocsIDs</div>
<div class="a" style="left:117px;top:401px;width:98px;height:1px;background:#FFFFFF"></div>
<div class="a" style="left:117px;top:401px;width:1px;height:15px;background:#FFFFFF"></div>
<div class="a" style="left:214px;top:401px;width:1px;height:16px;background:#7A7A7A"></div>
<div class="a t" style="left:117px;top:403px;width:98px;text-align:center">contextId</div>
<div class="a" style="left:216px;top:401px;width:100px;height:1px;background:#FFFFFF"></div>
<div class="a" style="left:216px;top:401px;width:1px;height:15px;background:#FFFFFF"></div>
<div class="a" style="left:315px;top:401px;width:1px;height:16px;background:#7A7A7A"></div>
<div class="a t" style="left:216px;top:403px;width:100px;text-align:center">Sender</div>
<div class="a" style="left:317px;top:401px;width:71px;height:1px;background:#FFFFFF"></div>
<div class="a" style="left:317px;top:401px;width:1px;height:15px;background:#FFFFFF"></div>
<div class="a" style="left:387px;top:401px;width:1px;height:16px;background:#7A7A7A"></div>
<div class="a t" style="left:317px;top:403px;width:71px;text-align:center">Receivers</div>
<div class="a" style="left:389px;top:401px;width:106px;height:1px;background:#FFFFFF"></div>
<div class="a" style="left:389px;top:401px;width:1px;height:15px;background:#FFFFFF"></div>
<div class="a" style="left:494px;top:401px;width:1px;height:16px;background:#7A7A7A"></div>
<div class="a t" style="left:389px;top:403px;width:106px;text-align:center">Performative</div>
<div class="a" style="left:496px;top:401px;width:134px;height:1px;background:#FFFFFF"></div>
<div class="a" style="left:496px;top:401px;width:1px;height:15px;background:#FFFFFF"></div>
<div class="a" style="left:629px;top:401px;width:1px;height:16px;background:#7A7A7A"></div>
<div class="a t" style="left:496px;top:403px;width:134px;text-align:center">Content</div>
<div class="a" style="left:631px;top:401px;width:83px;height:1px;background:#FFFFFF"></div>
<div class="a" style="left:631px;top:401px;width:1px;height:15px;background:#FFFFFF"></div>
<div class="a" style="left:713px;top:401px;width:1px;height:16px;background:#7A7A7A"></div>
<div class="a t" style="left:631px;top:403px;width:83px;text-align:center">Time</div>
<div class="a" style="left:715px;top:401px;width:103px;height:1px;background:#FFFFFF"></div>
<div class="a" style="left:715px;top:401px;width:1px;height:15px;background:#FFFFFF"></div>
<div class="a" style="left:817px;top:401px;width:1px;height:16px;background:#7A7A7A"></div>
<div class="a t" style="left:715px;top:403px;width:103px;text-align:center">Local Time</div>
<div class="a" style="left:16px;top:416px;width:803px;height:1px;background:#7A7A7A"></div>
<div class="a" style="left:818px;top:401px;width:1px;height:15px;background:#FFFFFF"></div>
<div class="a" style="left:16px;top:417px;width:803px;height:256px;background:#fff"></div>
<div class="a" style="left:16px;top:657px;width:803px;height:16px;background:#CCCCFF"></div>
<div class="a" style="left:16px;top:432px;width:803px;height:1px;background:#A0A0A0"></div>
<div class="a t" style="left:390px;top:418px;letter-spacing:0.25px;">current_time</div>
<div class="a t" style="left:611px;top:418px;width:102px;text-align:right;letter-spacing:0.33px;padding-right:0px">4</div>
<div class="a t" style="left:695px;top:418px;width:122px;text-align:right;letter-spacing:0.33px;padding-right:0px">1076430599345</div>
<div class="a" style="left:16px;top:448px;width:803px;height:1px;background:#A0A0A0"></div>
<div class="a t" style="left:17px;top:434px;">s0</div>
<div class="a t" style="left:118px;top:434px;">auction1</div>
<div class="a t" style="left:217px;top:434px;">f</div>
<div class="a t" style="left:318px;top:434px;">taxi1</div>
<div class="a t" style="left:390px;top:434px;">openauction</div>
<div class="a t" style="left:497px;top:434px;">taxi2station, 10, 20</div>
<div class="a t" style="left:611px;top:434px;width:102px;text-align:right;letter-spacing:0.33px;padding-right:0px">5</div>
<div class="a t" style="left:695px;top:434px;width:122px;text-align:right;letter-spacing:0.33px;padding-right:0px">1076430599346</div>
<div class="a" style="left:16px;top:464px;width:803px;height:1px;background:#A0A0A0"></div>
<div class="a t" style="left:17px;top:450px;">s0</div>
<div class="a t" style="left:118px;top:450px;">auction1</div>
<div class="a t" style="left:217px;top:450px;">f</div>
<div class="a t" style="left:318px;top:450px;">taxi2</div>
<div class="a t" style="left:390px;top:450px;">openauction</div>
<div class="a t" style="left:497px;top:450px;">taxi2station, 10, 20</div>
<div class="a t" style="left:611px;top:450px;width:102px;text-align:right;letter-spacing:0.33px;padding-right:0px">5</div>
<div class="a t" style="left:695px;top:450px;width:122px;text-align:right;letter-spacing:0.33px;padding-right:0px">1076430599356</div>
<div class="a" style="left:16px;top:480px;width:803px;height:1px;background:#A0A0A0"></div>
<div class="a t" style="left:17px;top:466px;">s0</div>
<div class="a t" style="left:118px;top:466px;">auction1</div>
<div class="a t" style="left:217px;top:466px;">f</div>
<div class="a t" style="left:318px;top:466px;">taxi3</div>
<div class="a t" style="left:390px;top:466px;">openauction</div>
<div class="a t" style="left:497px;top:466px;">taxi2station, 10, 20</div>
<div class="a t" style="left:611px;top:466px;width:102px;text-align:right;letter-spacing:0.33px;padding-right:0px">5</div>
<div class="a t" style="left:695px;top:466px;width:122px;text-align:right;letter-spacing:0.33px;padding-right:0px">1076430599366</div>
<div class="a" style="left:16px;top:496px;width:803px;height:1px;background:#A0A0A0"></div>
<div class="a t" style="left:390px;top:482px;letter-spacing:0.25px;">current_time</div>
<div class="a t" style="left:611px;top:482px;width:102px;text-align:right;letter-spacing:0.33px;padding-right:0px">6</div>
<div class="a t" style="left:695px;top:482px;width:122px;text-align:right;letter-spacing:0.33px;padding-right:0px">1076430599368</div>
<div class="a" style="left:16px;top:512px;width:803px;height:1px;background:#A0A0A0"></div>
<div class="a t" style="left:17px;top:498px;">s0</div>
<div class="a t" style="left:118px;top:498px;">auction1</div>
<div class="a t" style="left:217px;top:498px;">taxi1</div>
<div class="a t" style="left:318px;top:498px;">f</div>
<div class="a t" style="left:390px;top:498px;">bid</div>
<div class="a t" style="left:497px;top:498px;">taxi2station, 3</div>
<div class="a t" style="left:611px;top:498px;width:102px;text-align:right;letter-spacing:0.33px;padding-right:0px">7</div>
<div class="a t" style="left:695px;top:498px;width:122px;text-align:right;letter-spacing:0.33px;padding-right:0px">1076430599369</div>
<div class="a" style="left:16px;top:528px;width:803px;height:1px;background:#A0A0A0"></div>
<div class="a t" style="left:390px;top:514px;letter-spacing:0.25px;">current_time</div>
<div class="a t" style="left:611px;top:514px;width:102px;text-align:right;letter-spacing:0.33px;padding-right:0px">7</div>
<div class="a t" style="left:695px;top:514px;width:122px;text-align:right;letter-spacing:0.33px;padding-right:0px">1076430599376</div>
<div class="a" style="left:16px;top:544px;width:803px;height:1px;background:#A0A0A0"></div>
<div class="a t" style="left:17px;top:530px;">s0</div>
<div class="a t" style="left:118px;top:530px;">auction1</div>
<div class="a t" style="left:217px;top:530px;">taxi2</div>
<div class="a t" style="left:318px;top:530px;">f</div>
<div class="a t" style="left:390px;top:530px;">bid</div>
<div class="a t" style="left:497px;top:530px;">taxi2station, 5</div>
<div class="a t" style="left:611px;top:530px;width:102px;text-align:right;letter-spacing:0.33px;padding-right:0px">8</div>
<div class="a t" style="left:695px;top:530px;width:122px;text-align:right;letter-spacing:0.33px;padding-right:0px">1076430599377</div>
<div class="a" style="left:16px;top:560px;width:803px;height:1px;background:#A0A0A0"></div>
<div class="a t" style="left:390px;top:546px;letter-spacing:0.25px;">current_time</div>
<div class="a t" style="left:611px;top:546px;width:102px;text-align:right;letter-spacing:0.33px;padding-right:0px">8</div>
<div class="a t" style="left:695px;top:546px;width:122px;text-align:right;letter-spacing:0.33px;padding-right:0px">1076430599379</div>
<div class="a" style="left:16px;top:576px;width:803px;height:1px;background:#A0A0A0"></div>
<div class="a t" style="left:17px;top:562px;">s0</div>
<div class="a t" style="left:118px;top:562px;">auction1</div>
<div class="a t" style="left:217px;top:562px;">taxi3</div>
<div class="a t" style="left:318px;top:562px;">f</div>
<div class="a t" style="left:390px;top:562px;">bid</div>
<div class="a t" style="left:497px;top:562px;">taxi2station, 7</div>
<div class="a t" style="left:611px;top:562px;width:102px;text-align:right;letter-spacing:0.33px;padding-right:0px">9</div>
<div class="a t" style="left:695px;top:562px;width:122px;text-align:right;letter-spacing:0.33px;padding-right:0px">1076430599380</div>
<div class="a" style="left:16px;top:592px;width:803px;height:1px;background:#A0A0A0"></div>
<div class="a t" style="left:390px;top:578px;letter-spacing:0.25px;">current_time</div>
<div class="a t" style="left:611px;top:578px;width:102px;text-align:right;letter-spacing:0.33px;padding-right:0px">11</div>
<div class="a t" style="left:695px;top:578px;width:122px;text-align:right;letter-spacing:0.33px;padding-right:0px">1076430599382</div>
<div class="a" style="left:16px;top:608px;width:803px;height:1px;background:#A0A0A0"></div>
<div class="a t" style="left:17px;top:594px;">s0</div>
<div class="a t" style="left:118px;top:594px;">auction1</div>
<div class="a t" style="left:217px;top:594px;">f</div>
<div class="a t" style="left:318px;top:594px;">taxi1</div>
<div class="a t" style="left:390px;top:594px;">answer</div>
<div class="a t" style="left:497px;top:594px;">win, taxi2station, 3</div>
<div class="a t" style="left:611px;top:594px;width:102px;text-align:right;letter-spacing:0.33px;padding-right:0px">12</div>
<div class="a t" style="left:695px;top:594px;width:122px;text-align:right;letter-spacing:0.33px;padding-right:0px">1076430599383</div>
<div class="a" style="left:16px;top:624px;width:803px;height:1px;background:#A0A0A0"></div>
<div class="a t" style="left:390px;top:610px;letter-spacing:0.25px;">current_time</div>
<div class="a t" style="left:611px;top:610px;width:102px;text-align:right;letter-spacing:0.33px;padding-right:0px">12</div>
<div class="a t" style="left:695px;top:610px;width:122px;text-align:right;letter-spacing:0.33px;padding-right:0px">1076430599386</div>
<div class="a" style="left:16px;top:640px;width:803px;height:1px;background:#A0A0A0"></div>
<div class="a t" style="left:17px;top:626px;">s0</div>
<div class="a t" style="left:118px;top:626px;">auction1</div>
<div class="a t" style="left:217px;top:626px;">f</div>
<div class="a t" style="left:318px;top:626px;">taxi2</div>
<div class="a t" style="left:390px;top:626px;">answer</div>
<div class="a t" style="left:497px;top:626px;">lose, taxi2station, 5</div>
<div class="a t" style="left:611px;top:626px;width:102px;text-align:right;letter-spacing:0.33px;padding-right:0px">13</div>
<div class="a t" style="left:695px;top:626px;width:122px;text-align:right;letter-spacing:0.33px;padding-right:0px">1076430599387</div>
<div class="a" style="left:16px;top:656px;width:803px;height:1px;background:#A0A0A0"></div>
<div class="a t" style="left:390px;top:642px;letter-spacing:0.25px;">current_time</div>
<div class="a t" style="left:611px;top:642px;width:102px;text-align:right;letter-spacing:0.33px;padding-right:0px">13</div>
<div class="a t" style="left:695px;top:642px;width:122px;text-align:right;letter-spacing:0.33px;padding-right:0px">1076430599389</div>
<div class="a" style="left:16px;top:672px;width:803px;height:1px;background:#A0A0A0"></div>
<div class="a t" style="left:17px;top:658px;">s0</div>
<div class="a t" style="left:118px;top:658px;">auction1</div>
<div class="a t" style="left:217px;top:658px;">f</div>
<div class="a t" style="left:318px;top:658px;">taxi3</div>
<div class="a t" style="left:390px;top:658px;">answer</div>
<div class="a t" style="left:497px;top:658px;">lose, taxi2station, 7</div>
<div class="a t" style="left:611px;top:658px;width:102px;text-align:right;letter-spacing:0.33px;padding-right:0px">14</div>
<div class="a t" style="left:695px;top:658px;width:122px;text-align:right;letter-spacing:0.33px;padding-right:0px">1076430599390</div>
<div class="a" style="left:116px;top:417px;width:1px;height:256px;background:#A0A0A0"></div>
<div class="a" style="left:215px;top:417px;width:1px;height:256px;background:#A0A0A0"></div>
<div class="a" style="left:316px;top:417px;width:1px;height:256px;background:#A0A0A0"></div>
<div class="a" style="left:388px;top:417px;width:1px;height:256px;background:#A0A0A0"></div>
<div class="a" style="left:495px;top:417px;width:1px;height:256px;background:#A0A0A0"></div>
<div class="a" style="left:630px;top:417px;width:1px;height:256px;background:#A0A0A0"></div>
<div class="a" style="left:714px;top:417px;width:1px;height:256px;background:#A0A0A0"></div>
<div class="a" style="left:818px;top:417px;width:1px;height:256px;background:#A0A0A0"></div>
<div class="a" style="left:4px;top:711px;width:828px;height:1px;background:#FFFFFF"></div>
<div class="a" style="left:4px;top:712px;width:828px;height:1px;background:#FFFFFF"></div>
<div class="a" style="left:4px;top:711px;width:1px;height:26px;background:#FFFFFF"></div>
<div class="a" style="left:5px;top:711px;width:1px;height:26px;background:#FFFFFF"></div>
<div class="a" style="left:6px;top:713px;width:676px;height:1px;background:#7A7A7A"></div>
<div class="a" style="left:6px;top:714px;width:676px;height:1px;background:#7A7A7A"></div>
<div class="a" style="left:6px;top:713px;width:1px;height:24px;background:#7A7A7A"></div>
<div class="a" style="left:7px;top:713px;width:1px;height:24px;background:#7A7A7A"></div>
<div class="a" style="left:680px;top:713px;width:1px;height:24px;background:#FFFFFF"></div>
<div class="a" style="left:681px;top:713px;width:1px;height:24px;background:#FFFFFF"></div>
<div class="a" style="left:6px;top:735px;width:676px;height:1px;background:#FFFFFF"></div>
<div class="a" style="left:6px;top:736px;width:676px;height:1px;background:#FFFFFF"></div>
<div class="a t b" style="left:13px;top:719px;color:#B09010;letter-spacing:-0.12px">Running - Waiting for an event...</div>
<div class="a" style="left:682px;top:713px;width:149px;height:24px;border:1px solid #6A6A6A"></div>
<div class="a" style="left:683px;top:714px;width:147px;height:1px;background:#A8A8A8"></div>
<div class="a" style="left:683px;top:714px;width:1px;height:22px;background:#A8A8A8"></div>
</body></html>
